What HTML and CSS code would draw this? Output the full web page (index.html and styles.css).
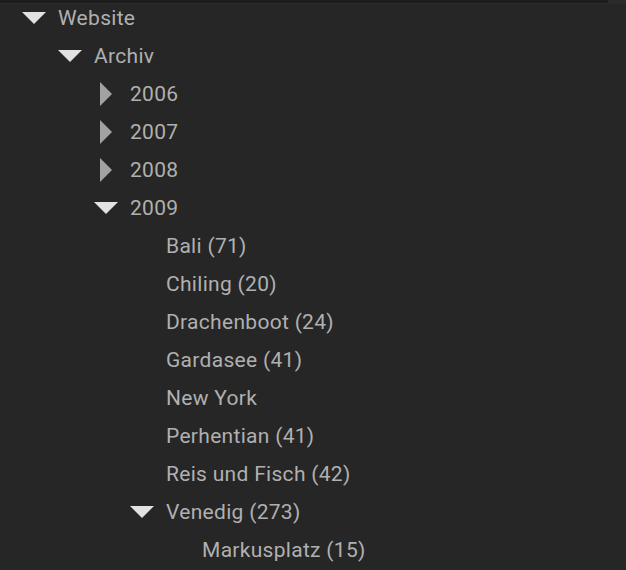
FILE: index.html
```html
<!DOCTYPE html>
<html>
<head>
<meta charset="utf-8">
<link rel="stylesheet" href="styles.css">
</head>
<body>
<div class="topbar"><div class="topbar-dark"></div></div>
<ul class="tree">
  <li class="row l0"><span class="tw down"></span><span class="label">Website</span></li>
  <li class="row l1"><span class="tw down"></span><span class="label">Archiv</span></li>
  <li class="row l2"><span class="tw right"></span><span class="label">2006</span></li>
  <li class="row l2"><span class="tw right"></span><span class="label">2007</span></li>
  <li class="row l2"><span class="tw right"></span><span class="label">2008</span></li>
  <li class="row l2"><span class="tw down"></span><span class="label">2009</span></li>
  <li class="row l3"><span class="tw"></span><span class="label">Bali (71)</span></li>
  <li class="row l3"><span class="tw"></span><span class="label">Chiling (20)</span></li>
  <li class="row l3"><span class="tw"></span><span class="label">Drachenboot (24)</span></li>
  <li class="row l3"><span class="tw"></span><span class="label">Gardasee (41)</span></li>
  <li class="row l3"><span class="tw"></span><span class="label">New York</span></li>
  <li class="row l3"><span class="tw"></span><span class="label">Perhentian (41)</span></li>
  <li class="row l3"><span class="tw"></span><span class="label">Reis und Fisch (42)</span></li>
  <li class="row l3"><span class="tw down"></span><span class="label">Venedig (273)</span></li>
  <li class="row l4"><span class="tw"></span><span class="label">Markusplatz (15)</span></li>
</ul>
</body>
</html>
```
FILE: styles.css
```css
html, body {
  margin: 0;
  padding: 0;
  background: #262626;
  height: 100%;
  overflow: hidden;
}
.topbar {
  height: 4px;
  background: #2b2b2b;
  display: flex;
}
.topbar-dark {
  width: 608px;
  height: 3px;
  background: #1c1c1c;
}
.tree {
  list-style: none;
  margin: 0;
  padding: 0;
  font-family: Roboto, "Noto Sans", sans-serif;
  font-size: 21px;
  letter-spacing: 0.3px;
  color: #b0b0b0;
}
.row {
  height: 38px;
  display: flex;
  align-items: center;
}
.row:first-child {
  height: 28px;
  margin-bottom: 5px;
}
.l0 { padding-left: 22px; }
.l1 { padding-left: 58px; }
.l2 { padding-left: 94px; }
.l3 { padding-left: 130px; }
.l4 { padding-left: 166px; }
.tw {
  width: 36px;
  height: 24px;
  flex: none;
  position: relative;
}
.tw.down::before {
  content: "";
  position: absolute;
  left: 0;
  top: 6px;
  width: 0;
  height: 0;
  border-left: 12px solid transparent;
  border-right: 12px solid transparent;
  border-top: 12px solid #e2e2e2;
}
.tw.right::before {
  content: "";
  position: absolute;
  left: 6px;
  top: 0;
  width: 0;
  height: 0;
  border-top: 12px solid transparent;
  border-bottom: 12px solid transparent;
  border-left: 12px solid #a2a2a2;
}
.label {
  line-height: 24px;
  white-space: nowrap;
  margin-top: -1px;
}
```
